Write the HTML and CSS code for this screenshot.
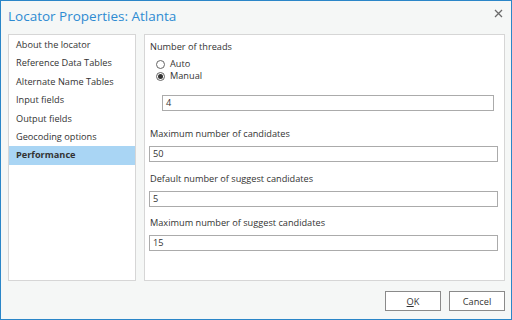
FILE: index.html
```html
<!DOCTYPE html>
<html lang="en">
<head>
    <meta charset="UTF-8" />
    <title>Locator Properties: Atlanta</title>
    <link rel="stylesheet" href="styles.css">
</head>
<body>
    <div class="ventana">
        <!-- Barra de titulo -->
        <div class="titulo">
            <span class="titulo-texto">Locator Properties: Atlanta</span>
            <span class="cerrar" aria-hidden="true">
                <svg width="9" height="9" viewBox="0 0 9 9">
                    <path d="M1 1 L8 8 M8 1 L1 8" stroke="#6b6b6b" stroke-width="1.3" fill="none" />
                </svg>
            </span>
        </div>

        <div class="contenido">
            <!-- Lista de paginas -->
            <ul class="lista">
                <li>About the locator</li>
                <li>Reference Data Tables</li>
                <li>Alternate Name Tables</li>
                <li>Input fields</li>
                <li>Output fields</li>
                <li>Geocoding options</li>
                <li class="activo">Performance</li>
            </ul>

            <!-- Panel de opciones -->
            <div class="panel">
                <div class="etiqueta">Number of threads</div>
                <div class="radios">
                    <label class="radio"><span class="circulo"></span>Auto</label>
                    <label class="radio"><span class="circulo marcado"></span>Manual</label>
                </div>
                <div class="campo sangria">4</div>

                <div class="etiqueta">Maximum number of candidates</div>
                <div class="campo">50</div>

                <div class="etiqueta">Default number of suggest candidates</div>
                <div class="campo">5</div>

                <div class="etiqueta">Maximum number of suggest candidates</div>
                <div class="campo">15</div>
            </div>
        </div>

        <div class="pie">
            <button class="boton"><u>O</u>K</button>
            <button class="boton">Cancel</button>
        </div>
    </div>
</body>
</html>
```

FILE: styles.css
```css
body {
    margin: 0;
    padding: 0;
    font-family: 'Open Sans', 'Noto Sans', sans-serif;
    font-size: 9.2px;
    color: #333;
}
.ventana {
    width: 512px;
    height: 320px;
    box-sizing: border-box;
    border: 1px solid #2b86c8;
    background-color: #f5f7f6;
    display: flex;
    flex-direction: column;
}
.titulo {
    height: 33px;
    display: flex;
    align-items: center;
    justify-content: space-between;
    padding: 0 7px 0 7px;
}
.titulo-texto {
    font-size: 13.5px;
    color: #2d8bd2;
    margin-top: -4px;
}
.cerrar {
    display: flex;
    margin-top: -8px;
    margin-right: 1px;
}
.contenido {
    display: flex;
    gap: 8px;
    padding: 0 6px 0 7px;
    height: 247px;
}
.lista {
    list-style: none;
    margin: 0;
    padding: 1px 0 0 0;
    width: 126px;
    background-color: #fff;
    border: 1px solid #d6d6d6;
}
.lista li {
    height: 18.4px;
    line-height: 18.4px;
    padding-left: 7px;
    white-space: nowrap;
}
.lista li.activo {
    background-color: #a9d5f4;
    font-weight: bold;
}
.panel {
    flex: 1;
    background-color: #fff;
    border: 1px solid #d6d6d6;
    padding: 3px 6px 0 4px;
}
.etiqueta {
    padding-left: 1px;
    height: 18px;
    line-height: 18px;
}
.radios {
    display: flex;
    flex-direction: column;
    padding-left: 7px;
    margin-top: 2px;
}
.radio {
    display: flex;
    align-items: center;
    height: 12px;
    line-height: 12px;
}
.circulo {
    width: 9px;
    height: 9px;
    border: 1px solid #666;
    border-radius: 50%;
    margin-right: 5px;
    box-sizing: border-box;
    display: inline-flex;
    align-items: center;
    justify-content: center;
}
.circulo.marcado::after {
    content: '';
    width: 5px;
    height: 5px;
    border-radius: 50%;
    background-color: #333;
}
.campo {
    height: 14px;
    line-height: 14px;
    border: 1px solid #ababab;
    padding-left: 3px;
    margin-top: 3px;
    margin-bottom: 7.5px;
}
.campo.sangria {
    margin: 13px 4px 14px 13px;
}
.pie {
    flex: 1;
    display: flex;
    justify-content: flex-end;
    align-items: center;
    gap: 8px;
    padding: 2px 6px 0 0;
}
.boton {
    width: 56px;
    height: 20px;
    font-family: 'Open Sans', 'Noto Sans', sans-serif;
    font-size: 9.2px;
    color: #333;
    background-color: #fff;
    border: 1px solid #8a8a8a;
    padding: 0;
}
```
